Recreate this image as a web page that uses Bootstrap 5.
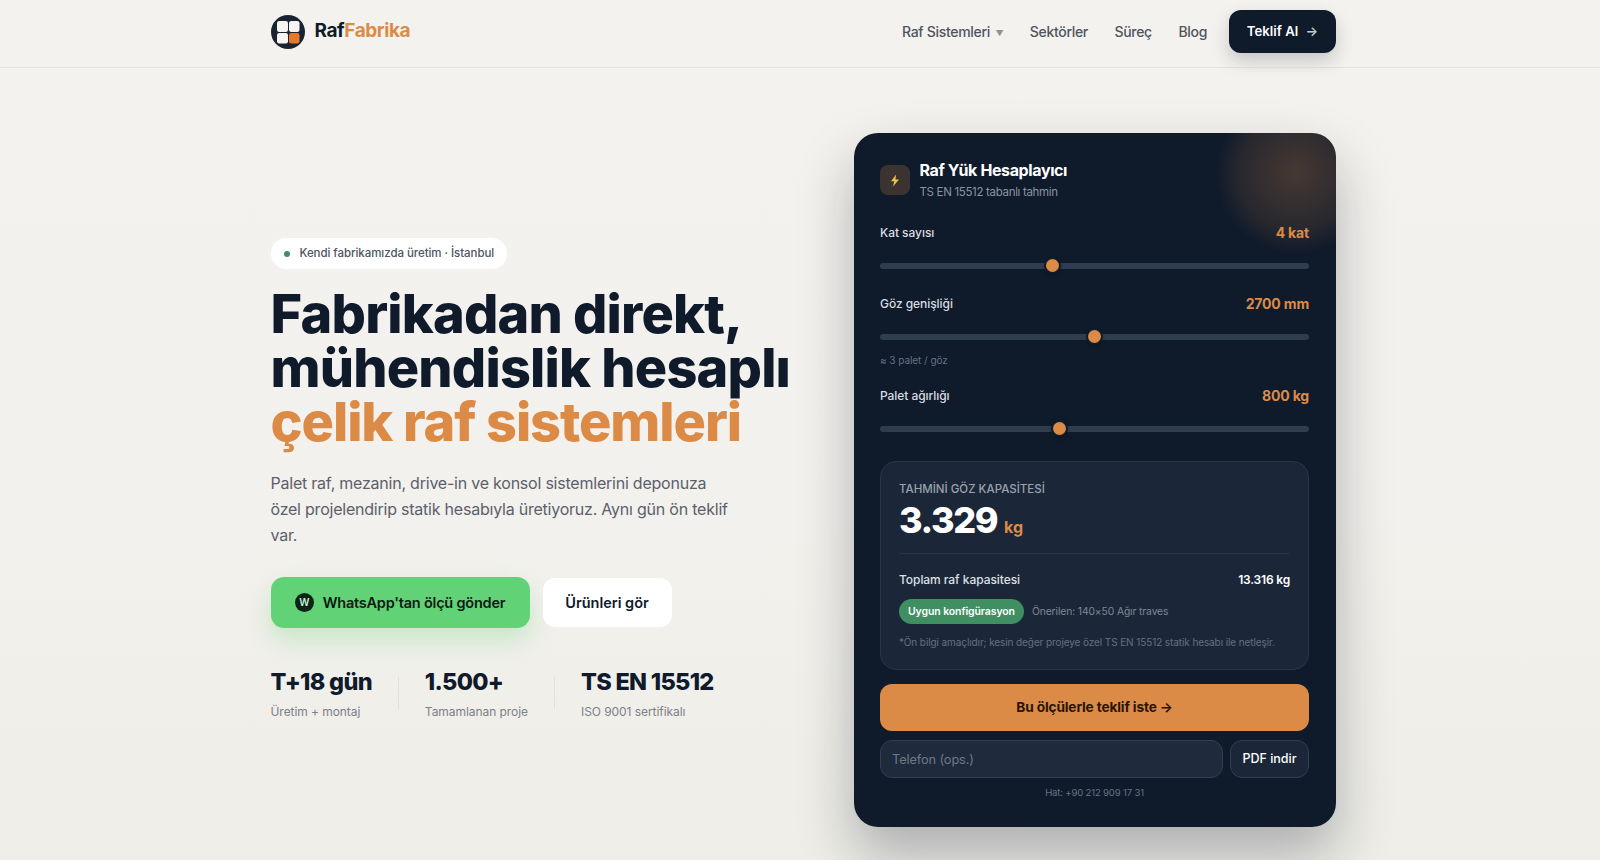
<!DOCTYPE html>
<html lang="tr">

<head>
  <meta charset="utf-8">
  <meta name="viewport" content="width=device-width">
  <title>RafFabrika</title>
  <link href="https://cdn.jsdelivr.net/npm/bootstrap@5.3.2/dist/css/bootstrap.min.css" rel="stylesheet" type="text/css" />
  <style>
    body {
      font-family: Inter, "Noto Sans", sans-serif;
      background: linear-gradient(180deg, #f4f2ee 0%, #f3f1ed 60%, #eeede7 100%);
      color: #0f1a2b;
      height: 860px;
      overflow: hidden;
    }

    .page-wrap { width: 1065.5px; margin-left: 270.5px; }

    .top-bar { height: 68px; border-bottom: 1px solid #e6e5e1; background: #f4f2ee; padding-bottom: 4px; }
    .logo-mark { width: 34px; height: 34px; }
    .logo-text { font-size: 19px; font-weight: 700; letter-spacing: -0.022em; margin-left: 10px; color: #0f1a2b; }
    .accent { color: #dc8b47; }
    .top-link { font-size: 14px; font-weight: 500; color: #4e5460; text-decoration: none; letter-spacing: -0.022em; }
    .top-link .caret { font-size: 8px; color: #8f9196; margin-left: 2px; vertical-align: 1px; }
    .top-links { gap: 26.5px; margin-right: 22px; }
    .quote-btn {
      background: #0f1a2b; color: #fff; font-size: 13.2px; font-weight: 600; border: 0;
      border-radius: 12px; height: 43px; width: 107px; padding: 0;
      box-shadow: 0 8px 18px rgba(15, 26, 43, .2);
    }
    .quote-btn:hover { background: #0f1a2b; color: #fff; }
    .quote-btn .arr { color: #c5c9cf; margin-left: 4px; }

    .hero-row { height: 824px; }
    .hero-left { width: 583px; margin-bottom: 3px; }

    .tag-pill {
      background: #fff; border-radius: 16px; height: 31px; padding: 0 13px; font-size: 11.5px;
      font-weight: 500; color: #4e5460; gap: 10px; letter-spacing: -0.005em;
    }
    .tag-dot { width: 6px; height: 6px; border-radius: 50%; background: #3f8f63; }

    .hero-title { font-size: 54px; font-weight: 800; line-height: 54px; letter-spacing: -0.015em; margin: 18px 0 0; color: #0f1a2b; }
    .hero-title .title-accent { color: #dc8b47; letter-spacing: -0.02em; }
    .hero-text { font-size: 16px; line-height: 26px; color: #5b606b; width: 470px; margin: 21px 0 0; letter-spacing: -0.014em; }

    .btn-wa {
      background: #62d277; color: #0d1a14; font-size: 14.5px; font-weight: 600; border: 0; height: 51px; width: 259px;
      border-radius: 13px; padding: 0; gap: 9px; letter-spacing: -0.015em; box-shadow: 0 12px 24px rgba(98, 210, 119, .3);
    }
    .btn-wa:hover { background: #62d277; color: #0d1a14; }
    .wa-dot {
      width: 19px; height: 19px; border-radius: 50%; background: #0c2417; color: #c9f0d3;
      font-size: 10px; font-weight: 600; line-height: 19px; text-align: center;
    }
    .btn-plain {
      background: #fff; color: #0f1a2b; font-size: 14.5px; font-weight: 600; border: 0; height: 49px; width: 129px;
      border-radius: 12px; padding: 0;
    }
    .btn-plain:hover { background: #fff; color: #0f1a2b; }
    .hero-btns { margin-top: 29px; gap: 13px; }

    .stat-row { margin-top: 39px; }
    .stat-num { font-size: 23.5px; font-weight: 800; letter-spacing: -0.03em; line-height: 29px; color: #0f1a2b; }
    .stat-sub { font-size: 12px; color: #7c8088; margin-top: 8px; line-height: 15px; letter-spacing: -0.005em; }
    .stat-line { width: 1px; height: 32px; background: #e1e0db; margin: 0 26px; align-self: center; }

    .calc-card {
      width: 482px; height: 694px; background: #0f1a2b; border-radius: 24px; padding: 27px 27px 0 26px;
      position: relative; overflow: hidden; color: #fff;
    }
    .calc-shadow { border-radius: 24px; box-shadow: 0 28px 56px rgba(15, 26, 43, .3); }
    .calc-glow {
      position: absolute; right: -40px; top: -40px; width: 160px; height: 160px; border-radius: 50%;
      background: radial-gradient(circle, rgba(220, 139, 71, .27) 0%, rgba(220, 139, 71, .12) 50%, rgba(220, 139, 71, 0) 72%);
    }
    .bolt-box { width: 30px; height: 30px; border-radius: 8px; background: #3a332f; margin: 5px 1.5px 0 0; }
    .calc-title { font-size: 16px; font-weight: 700; line-height: 20px; letter-spacing: -0.024em; }
    .calc-sub { font-size: 11.5px; color: #8b93a0; line-height: 16px; margin-top: 4px; letter-spacing: -0.028em; }

    .field-head { font-size: 12px; font-weight: 500; color: #d9dce1; line-height: 18px; letter-spacing: -0.005em; }
    .field-first { margin-top: 24px; }
    .field-second { margin-top: 23px; }
    .field-third { margin-top: 20px; }
    .field-val { font-size: 14px; font-weight: 700; color: #dc8b47; letter-spacing: -0.012em; }
    .field-note { font-size: 10px; color: #677181; line-height: 14px; letter-spacing: -0.005em; margin-top: 10px; }

    .calc-range { height: 13px; display: block; margin-top: 17px; }
    .calc-range::-webkit-slider-runnable-track { height: 6px; background: #303d4f; border-radius: 3px; }
    .calc-range::-webkit-slider-thumb {
      width: 13px; height: 13px; margin-top: -3.5px; background: #dc8b47; border-radius: 50%;
      box-shadow: 0 0 0 2px #0f1a2b, 0 2px 5px rgba(0, 0, 0, .4);
    }

    .result-box {
      background: #1b2739; border: 1px solid #2a3546; border-radius: 16px; height: 209px;
      padding: 19px 18px 0; margin-top: 26px;
    }
    .result-label { font-size: 11.5px; font-weight: 500; color: #9aa1ad; line-height: 16px; margin-bottom: 2px; }
    .result-num { font-size: 36px; font-weight: 800; line-height: 42px; letter-spacing: -0.04em; color: #fff; }
    .result-unit { font-size: 16px; font-weight: 700; color: #dc8b47; margin-left: 7px; }
    .result-line { height: 1px; background: #263245; margin: 12px 0 0; }
    .result-row { margin-top: 17px; }
    .result-key { font-size: 12px; font-weight: 500; color: #dde0e5; letter-spacing: -0.005em; }
    .result-val { font-size: 12px; font-weight: 600; color: #fff; letter-spacing: -0.015em; }
    .pill-row { margin-top: 10px; }
    .ok-pill {
      background: #3f8f63; color: #fff; font-size: 10.5px; font-weight: 600; height: 25px; line-height: 25px;
      padding: 0 9px; border-radius: 13px; letter-spacing: -0.01em;
    }
    .pill-side { font-size: 10.3px; color: #7e8795; letter-spacing: -0.01em; }
    .fine-print { font-size: 10px; color: #667082; line-height: 14px; margin-top: 11px; letter-spacing: -0.01em; }

    .btn-order {
      background: #dc8b47; color: #2a1405; font-size: 13.7px; font-weight: 700; height: 47px; border-radius: 12px; border: 0;
      width: 100%; margin-top: 14px; letter-spacing: -0.01em;
    }
    .btn-order:hover { background: #dc8b47; color: #2a1405; }
    .phone-row { margin-top: 9px; gap: 7px; }
    .phone-input {
      background: #1f2a3c; border: 1px solid #333f50; border-radius: 12px; height: 38px; color: #fff;
      font-size: 12.8px; padding: 0 11px; letter-spacing: -0.01em;
    }
    .phone-input::placeholder { color: #6f7886; }
    .phone-input:focus { background: #1f2a3c; border-color: #333f50; color: #fff; box-shadow: none; }
    .btn-pdf {
      background: #1b2739; border: 1px solid #333f50; border-radius: 12px; height: 38px; width: 79px; padding: 0;
      color: #fff; font-size: 12.5px; font-weight: 500; flex: none;
    }
    .btn-pdf:hover { background: #1b2739; color: #fff; border-color: #333f50; }
    .line-note { font-size: 9.6px; color: #677181; line-height: 14px; margin-top: 8px; text-align: center; letter-spacing: -0.02em; }
  </style>
</head>

<body>
  <header class="top-bar">
    <div class="page-wrap h-100 d-flex align-items-center justify-content-between">
      <a class="d-flex align-items-center text-decoration-none" href="#">
        <svg class="logo-mark" viewBox="0 0 34 34">
          <circle cx="17" cy="17" r="17" fill="#1a2332" />
          <rect x="6" y="6" width="11" height="11" rx="2.2" fill="#f6f5f2" />
          <rect x="18" y="6" width="10.5" height="11" rx="2.2" fill="#f6f5f2" />
          <rect x="6" y="18" width="11" height="10.5" rx="2.2" fill="#f6f5f2" />
          <rect x="18" y="18" width="10.5" height="10.5" rx="2.2" fill="#e8782c" />
        </svg>
        <span class="logo-text">Raf<span class="accent">Fabrika</span></span>
      </a>
      <nav class="d-flex align-items-center">
        <div class="d-flex align-items-center top-links">
          <a class="top-link" href="#">Raf Sistemleri <span class="caret">▼</span></a>
          <a class="top-link" href="#">Sektörler</a>
          <a class="top-link" href="#">Süreç</a>
          <a class="top-link" href="#">Blog</a>
        </div>
        <button class="btn quote-btn">Teklif Al <span class="arr">→</span></button>
      </nav>
    </div>
  </header>

  <main class="page-wrap d-flex align-items-center justify-content-between hero-row">
    <section class="hero-left">
      <div class="d-inline-flex align-items-center tag-pill">
        <span class="tag-dot"></span>
        <span>Kendi fabrikamızda üretim · İstanbul</span>
      </div>
      <h1 class="hero-title">Fabrikadan direkt,<br>mühendislik hesaplı<br><span class="title-accent">çelik raf sistemleri</span></h1>
      <p class="hero-text">Palet raf, mezanin, drive-in ve konsol sistemlerini deponuza özel projelendirip statik hesabıyla üretiyoruz. Aynı gün ön teklif var.</p>
      <div class="d-flex align-items-center hero-btns">
        <button class="btn btn-wa d-flex align-items-center justify-content-center"><span class="wa-dot">W</span>WhatsApp'tan ölçü gönder</button>
        <button class="btn btn-plain">Ürünleri gör</button>
      </div>
      <div class="d-flex stat-row">
        <div>
          <div class="stat-num">T+18 gün</div>
          <div class="stat-sub">Üretim + montaj</div>
        </div>
        <div class="stat-line"></div>
        <div>
          <div class="stat-num">1.500+</div>
          <div class="stat-sub">Tamamlanan proje</div>
        </div>
        <div class="stat-line"></div>
        <div>
          <div class="stat-num">TS EN 15512</div>
          <div class="stat-sub">ISO 9001 sertifikalı</div>
        </div>
      </div>
    </section>

    <aside class="calc-shadow">
      <div class="calc-card">
        <div class="calc-glow"></div>
        <div class="d-flex gap-2">
          <div class="bolt-box d-flex align-items-center justify-content-center">
            <svg width="10" height="13" viewBox="0 0 10 13">
              <path d="M6.2 0.5 1 7.2h3.3L3 12.5 9 5.4H5.4z" fill="#f1c04f" />
            </svg>
          </div>
          <div>
            <div class="calc-title">Raf Yük Hesaplayıcı</div>
            <div class="calc-sub">TS EN 15512 tabanlı tahmin</div>
          </div>
        </div>

        <div class="d-flex justify-content-between align-items-center field-head field-first">
          <span>Kat sayısı</span><span class="field-val">4 kat</span>
        </div>
        <input type="range" class="form-range calc-range" min="2" max="7" value="4">

        <div class="d-flex justify-content-between align-items-center field-head field-second">
          <span>Göz genişliği</span><span class="field-val">2700 mm</span>
        </div>
        <input type="range" class="form-range calc-range" min="1800" max="3600" value="2700">
        <div class="field-note">≈ 3 palet / göz</div>

        <div class="d-flex justify-content-between align-items-center field-head field-third">
          <span>Palet ağırlığı</span><span class="field-val">800 kg</span>
        </div>
        <input type="range" class="form-range calc-range" min="300" max="1500" value="800">

        <div class="result-box">
          <div class="result-label">TAHMİNİ GÖZ KAPASİTESİ</div>
          <div class="d-flex align-items-baseline">
            <span class="result-num">3.329</span><span class="result-unit">kg</span>
          </div>
          <div class="result-line"></div>
          <div class="d-flex justify-content-between result-row">
            <span class="result-key">Toplam raf kapasitesi</span><span class="result-val">13.316 kg</span>
          </div>
          <div class="d-flex align-items-center gap-2 pill-row">
            <span class="ok-pill">Uygun konfigürasyon</span>
            <span class="pill-side">Önerilen: 140×50 Ağır traves</span>
          </div>
          <div class="fine-print">*Ön bilgi amaçlıdır; kesin değer projeye özel TS EN 15512 statik hesabı ile netleşir.</div>
        </div>

        <button class="btn btn-order">Bu ölçülerle teklif iste →</button>
        <div class="d-flex phone-row">
          <input class="form-control phone-input" placeholder="Telefon (ops.)">
          <button class="btn btn-pdf">PDF indir</button>
        </div>
        <div class="line-note">Hat: +90 212 909 17 31</div>
      </div>
    </aside>
  </main>
  <script src="https://cdn.jsdelivr.net/npm/bootstrap@5.3.2/dist/js/bootstrap.bundle.min.js"></script>
</body>

</html>
